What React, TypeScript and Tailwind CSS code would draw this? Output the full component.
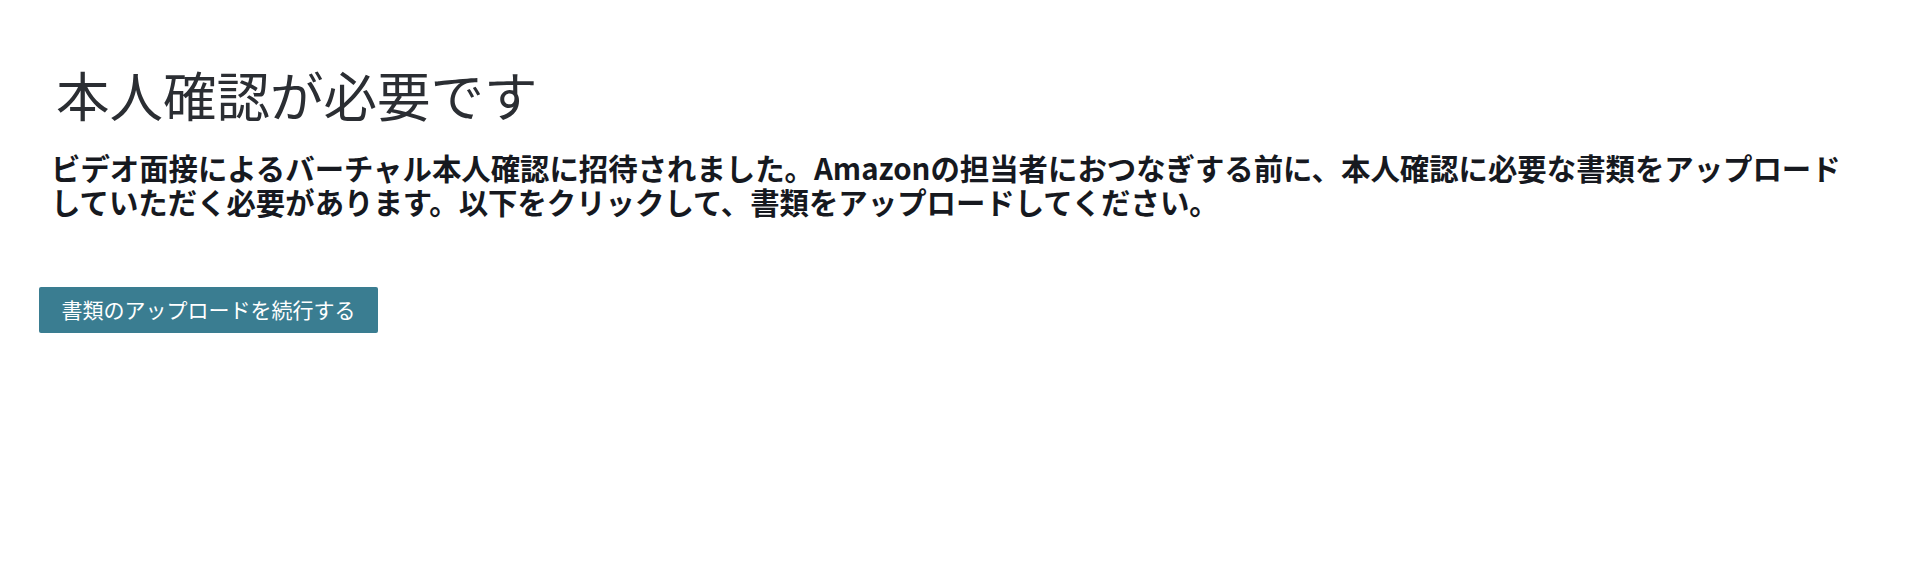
export default function App() {
  return (
    <div
      className="min-h-[571px] w-full bg-white"
      style={{ fontFamily: '"Noto Sans CJK JP", "Noto Sans", sans-serif' }}
    >
      <div className="flex flex-col items-start pt-[63px]">
        <h1 className="pl-[56px] text-[53.5px] leading-[62px] font-normal text-[#2b2e33]">
          本人確認が必要です
        </h1>
        <p className="mt-[25px] pl-[51px] pr-[30px] text-[29.4px] leading-[34px] font-bold text-[#16191f]">
          <span className="block">
            ビデオ面接によるバーチャル本人確認に招待されました。Amazonの担当者におつなぎする前に、本人確認に必要な書類をアップロード
          </span>
          <span className="block">
            していただく必要があります。以下をクリックして、書類をアップロードしてください。
          </span>
        </p>
        <button className="ml-[39px] mt-[69px] h-[46px] w-[339px] rounded-[2px] bg-[#3a7d91] text-[21px] text-white">
          書類のアップロードを続行する
        </button>
      </div>
    </div>
  )
}
